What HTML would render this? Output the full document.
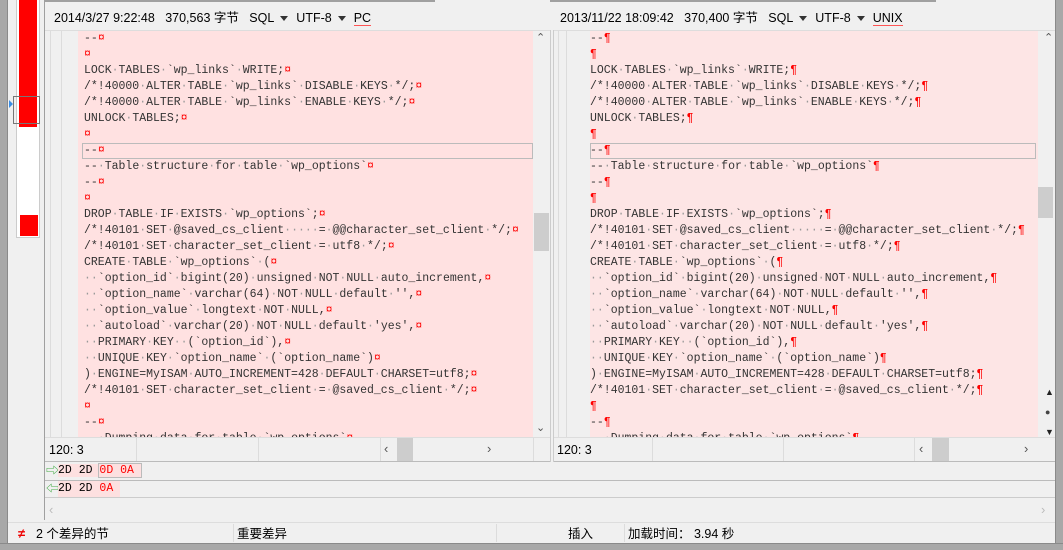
<!DOCTYPE html>
<html><head><meta charset="utf-8"><style>
*{margin:0;padding:0;box-sizing:border-box}
body{width:1063px;height:550px;overflow:hidden;background:#f0f0f0;position:relative;font-family:"Liberation Sans","Noto Sans CJK SC",sans-serif;font-size:12px;color:#000}
.abs{position:absolute}
.code{font-family:"Liberation Mono",monospace;font-size:11.5px;line-height:16px;color:#333;white-space:pre}
.code div{height:16px}
.e{color:#f00}
.d{color:#999}
.hdr{font-size:12.5px;top:7px;white-space:nowrap}
.tri{display:inline-block;width:0;height:0;border-left:4px solid transparent;border-right:4px solid transparent;border-top:5px solid #333;vertical-align:middle;margin:0 8px 0 6px}
.vl{position:absolute;background:#dcdcdc;width:1px}
.sb{font-size:12.5px;top:524px;line-height:20px}
</style></head><body>
<div class="abs" style="left:0;top:0;width:8px;height:550px;background:#a8a8a8;border-right:1px solid #8a8a8a"></div>
<div class="abs" style="left:1055px;top:0;width:8px;height:550px;background:#a8a8a8;border-left:1px solid #8a8a8a"></div>
<div class="abs" style="left:0;top:543px;width:1063px;height:7px;background:#a8a8a8;border-top:1px solid #8a8a8a"></div>

<div class="abs" style="left:16px;top:0;width:24px;height:238px;background:#fff;border:1px solid #ccc;border-top:none"></div>
<div class="abs" style="left:19px;top:0;width:18px;height:127px;background:#f00"></div>
<div class="abs" style="left:20px;top:215px;width:18px;height:21px;background:#f00"></div>
<div class="abs" style="left:13px;top:96px;width:27px;height:28px;border:1px solid #777"></div>
<div class="abs" style="left:9px;top:100px;width:0;height:0;border-top:4px solid transparent;border-bottom:4px solid transparent;border-left:4px solid #3a8ee6"></div>
<div class="abs" style="left:44px;top:0;width:1px;height:520px;background:#a0a0a0"></div>

<div class="abs" style="left:44px;top:0;width:391px;height:2px;background:#a0a0a0"></div>
<div class="abs hdr" style="left:54px">2014/3/27 9:22:48 &nbsp;&nbsp;370,563 字节 &nbsp;&nbsp;SQL<span class="tri"></span>UTF-8<span class="tri"></span><span style="border-bottom:1px solid #f55">PC</span></div>
<div class="abs" style="left:550px;top:0;width:386px;height:2px;background:#a0a0a0"></div>
<div class="abs hdr" style="left:560px">2013/11/22 18:09:42 &nbsp;&nbsp;370,400 字节 &nbsp;&nbsp;SQL<span class="tri"></span>UTF-8<span class="tri"></span><span style="border-bottom:1px solid #f55">UNIX</span></div>

<div class="abs" style="left:45px;top:30px;width:505px;height:408px;background:#f0f0f0;border-top:1px solid #ddd;overflow:hidden">
 <div class="vl" style="left:5px;top:0;height:408px"></div>
 <div class="vl" style="left:16px;top:0;height:408px"></div>
 <div class="abs" style="left:33px;top:0;width:455px;height:408px;background:#ffe1e1"></div>
 <div class="abs" style="left:37px;top:112px;width:451px;height:16px;border:1px solid #bbb"></div>
 <div class="abs code" style="left:39px;top:0px;width:449px;overflow:hidden"><div>--<span class="e">¤</span></div><div><span class="e">¤</span></div><div>LOCK<span class="d">·</span>TABLES<span class="d">·</span>`wp_links`<span class="d">·</span>WRITE;<span class="e">¤</span></div><div>/*!40000<span class="d">·</span>ALTER<span class="d">·</span>TABLE<span class="d">·</span>`wp_links`<span class="d">·</span>DISABLE<span class="d">·</span>KEYS<span class="d">·</span>*/;<span class="e">¤</span></div><div>/*!40000<span class="d">·</span>ALTER<span class="d">·</span>TABLE<span class="d">·</span>`wp_links`<span class="d">·</span>ENABLE<span class="d">·</span>KEYS<span class="d">·</span>*/;<span class="e">¤</span></div><div>UNLOCK<span class="d">·</span>TABLES;<span class="e">¤</span></div><div><span class="e">¤</span></div><div>--<span class="e">¤</span></div><div>--<span class="d">·</span>Table<span class="d">·</span>structure<span class="d">·</span>for<span class="d">·</span>table<span class="d">·</span>`wp_options`<span class="e">¤</span></div><div>--<span class="e">¤</span></div><div><span class="e">¤</span></div><div>DROP<span class="d">·</span>TABLE<span class="d">·</span>IF<span class="d">·</span>EXISTS<span class="d">·</span>`wp_options`;<span class="e">¤</span></div><div>/*!40101<span class="d">·</span>SET<span class="d">·</span>@saved_cs_client<span class="d">·····</span>=<span class="d">·</span>@@character_set_client<span class="d">·</span>*/;<span class="e">¤</span></div><div>/*!40101<span class="d">·</span>SET<span class="d">·</span>character_set_client<span class="d">·</span>=<span class="d">·</span>utf8<span class="d">·</span>*/;<span class="e">¤</span></div><div>CREATE<span class="d">·</span>TABLE<span class="d">·</span>`wp_options`<span class="d">·</span>(<span class="e">¤</span></div><div><span class="d">··</span>`option_id`<span class="d">·</span>bigint(20)<span class="d">·</span>unsigned<span class="d">·</span>NOT<span class="d">·</span>NULL<span class="d">·</span>auto_increment,<span class="e">¤</span></div><div><span class="d">··</span>`option_name`<span class="d">·</span>varchar(64)<span class="d">·</span>NOT<span class="d">·</span>NULL<span class="d">·</span>default<span class="d">·</span>'',<span class="e">¤</span></div><div><span class="d">··</span>`option_value`<span class="d">·</span>longtext<span class="d">·</span>NOT<span class="d">·</span>NULL,<span class="e">¤</span></div><div><span class="d">··</span>`autoload`<span class="d">·</span>varchar(20)<span class="d">·</span>NOT<span class="d">·</span>NULL<span class="d">·</span>default<span class="d">·</span>'yes',<span class="e">¤</span></div><div><span class="d">··</span>PRIMARY<span class="d">·</span>KEY<span class="d">··</span>(`option_id`),<span class="e">¤</span></div><div><span class="d">··</span>UNIQUE<span class="d">·</span>KEY<span class="d">·</span>`option_name`<span class="d">·</span>(`option_name`)<span class="e">¤</span></div><div>)<span class="d">·</span>ENGINE=MyISAM<span class="d">·</span>AUTO_INCREMENT=428<span class="d">·</span>DEFAULT<span class="d">·</span>CHARSET=utf8;<span class="e">¤</span></div><div>/*!40101<span class="d">·</span>SET<span class="d">·</span>character_set_client<span class="d">·</span>=<span class="d">·</span>@saved_cs_client<span class="d">·</span>*/;<span class="e">¤</span></div><div><span class="e">¤</span></div><div>--<span class="e">¤</span></div><div>--<span class="d">·</span>Dumping<span class="d">·</span>data<span class="d">·</span>for<span class="d">·</span>table<span class="d">·</span>`wp_options`<span class="e">¤</span></div></div>
 <div class="abs" style="left:488px;top:0;width:17px;height:408px;background:#f0f0f0"></div>
 <div class="abs" style="left:489px;top:182px;width:15px;height:38px;background:#cdcdcd"></div>
 <div class="abs" style="left:491px;top:0;font-size:11px;color:#555">⌃</div>
 <div class="abs" style="left:491px;top:390px;font-size:11px;color:#555">⌄</div>
</div>
<div class="abs" style="left:45px;top:437px;width:505px;height:25px;background:#f0f0f0;border-top:1px solid #ddd;border-bottom:1px solid #bbb"></div>
<div class="abs" style="left:49px;top:443px;font-size:12.5px">120: 3</div>
<div class="vl" style="left:136px;top:438px;height:23px"></div>
<div class="vl" style="left:258px;top:438px;height:23px"></div>
<div class="vl" style="left:380px;top:438px;height:23px"></div>
<div class="abs" style="left:397px;top:438px;width:16px;height:23px;background:#cdcdcd"></div>
<div class="abs" style="left:384px;top:441px;color:#555;font-size:13px">‹</div>
<div class="abs" style="left:487px;top:441px;color:#555;font-size:13px">›</div>
<div class="vl" style="left:533px;top:438px;height:23px"></div>

<div class="abs" style="left:550px;top:30px;width:4px;height:432px;background:#f0f0f0;border-left:1px solid #ccc;border-right:1px solid #ccc"></div>

<div class="abs" style="left:554px;top:30px;width:501px;height:408px;background:#f0f0f0;border-top:1px solid #ddd;overflow:hidden">
 <div class="vl" style="left:4px;top:0;height:408px"></div>
 <div class="vl" style="left:12px;top:0;height:408px"></div>
 <div class="abs" style="left:36px;top:0;width:448px;height:408px;background:#fde5e5"></div>
 <div class="abs" style="left:36px;top:112px;width:446px;height:16px;border:1px solid #bbb"></div>
 <div class="abs code" style="left:36px;top:0px;width:446px;overflow:hidden"><div>--<span class="e">¶</span></div><div><span class="e">¶</span></div><div>LOCK<span class="d">·</span>TABLES<span class="d">·</span>`wp_links`<span class="d">·</span>WRITE;<span class="e">¶</span></div><div>/*!40000<span class="d">·</span>ALTER<span class="d">·</span>TABLE<span class="d">·</span>`wp_links`<span class="d">·</span>DISABLE<span class="d">·</span>KEYS<span class="d">·</span>*/;<span class="e">¶</span></div><div>/*!40000<span class="d">·</span>ALTER<span class="d">·</span>TABLE<span class="d">·</span>`wp_links`<span class="d">·</span>ENABLE<span class="d">·</span>KEYS<span class="d">·</span>*/;<span class="e">¶</span></div><div>UNLOCK<span class="d">·</span>TABLES;<span class="e">¶</span></div><div><span class="e">¶</span></div><div>--<span class="e">¶</span></div><div>--<span class="d">·</span>Table<span class="d">·</span>structure<span class="d">·</span>for<span class="d">·</span>table<span class="d">·</span>`wp_options`<span class="e">¶</span></div><div>--<span class="e">¶</span></div><div><span class="e">¶</span></div><div>DROP<span class="d">·</span>TABLE<span class="d">·</span>IF<span class="d">·</span>EXISTS<span class="d">·</span>`wp_options`;<span class="e">¶</span></div><div>/*!40101<span class="d">·</span>SET<span class="d">·</span>@saved_cs_client<span class="d">·····</span>=<span class="d">·</span>@@character_set_client<span class="d">·</span>*/;<span class="e">¶</span></div><div>/*!40101<span class="d">·</span>SET<span class="d">·</span>character_set_client<span class="d">·</span>=<span class="d">·</span>utf8<span class="d">·</span>*/;<span class="e">¶</span></div><div>CREATE<span class="d">·</span>TABLE<span class="d">·</span>`wp_options`<span class="d">·</span>(<span class="e">¶</span></div><div><span class="d">··</span>`option_id`<span class="d">·</span>bigint(20)<span class="d">·</span>unsigned<span class="d">·</span>NOT<span class="d">·</span>NULL<span class="d">·</span>auto_increment,<span class="e">¶</span></div><div><span class="d">··</span>`option_name`<span class="d">·</span>varchar(64)<span class="d">·</span>NOT<span class="d">·</span>NULL<span class="d">·</span>default<span class="d">·</span>'',<span class="e">¶</span></div><div><span class="d">··</span>`option_value`<span class="d">·</span>longtext<span class="d">·</span>NOT<span class="d">·</span>NULL,<span class="e">¶</span></div><div><span class="d">··</span>`autoload`<span class="d">·</span>varchar(20)<span class="d">·</span>NOT<span class="d">·</span>NULL<span class="d">·</span>default<span class="d">·</span>'yes',<span class="e">¶</span></div><div><span class="d">··</span>PRIMARY<span class="d">·</span>KEY<span class="d">··</span>(`option_id`),<span class="e">¶</span></div><div><span class="d">··</span>UNIQUE<span class="d">·</span>KEY<span class="d">·</span>`option_name`<span class="d">·</span>(`option_name`)<span class="e">¶</span></div><div>)<span class="d">·</span>ENGINE=MyISAM<span class="d">·</span>AUTO_INCREMENT=428<span class="d">·</span>DEFAULT<span class="d">·</span>CHARSET=utf8;<span class="e">¶</span></div><div>/*!40101<span class="d">·</span>SET<span class="d">·</span>character_set_client<span class="d">·</span>=<span class="d">·</span>@saved_cs_client<span class="d">·</span>*/;<span class="e">¶</span></div><div><span class="e">¶</span></div><div>--<span class="e">¶</span></div><div>--<span class="d">·</span>Dumping<span class="d">·</span>data<span class="d">·</span>for<span class="d">·</span>table<span class="d">·</span>`wp_options`<span class="e">¶</span></div></div>
 <div class="abs" style="left:484px;top:156px;width:15px;height:31px;background:#cdcdcd"></div>
 <div class="abs" style="left:490px;top:0;font-size:11px;color:#555">⌃</div>
 <div class="abs" style="left:491px;top:356px;font-size:9px;color:#222">▲</div>
 <div class="abs" style="left:491px;top:376px;font-size:9px;color:#444">●</div>
 <div class="abs" style="left:491px;top:396px;font-size:9px;color:#222">▼</div>
</div>
<div class="abs" style="left:554px;top:437px;width:501px;height:25px;background:#f0f0f0;border-top:1px solid #ddd;border-bottom:1px solid #bbb"></div>
<div class="abs" style="left:557px;top:443px;font-size:12.5px">120: 3</div>
<div class="vl" style="left:652px;top:438px;height:23px"></div>
<div class="vl" style="left:783px;top:438px;height:23px"></div>
<div class="vl" style="left:914px;top:438px;height:23px"></div>
<div class="abs" style="left:932px;top:438px;width:17px;height:23px;background:#cdcdcd"></div>
<div class="abs" style="left:919px;top:441px;color:#555;font-size:13px">‹</div>
<div class="abs" style="left:1024px;top:441px;color:#555;font-size:13px">›</div>

<div class="abs" style="left:45px;top:480px;width:1010px;height:1px;background:#bbb"></div>
<div class="abs" style="left:45px;top:497px;width:1010px;height:1px;background:#ccc"></div>
<div class="abs" style="left:46px;top:463px;color:#4a4;font-size:13px;line-height:16px">⇨</div>
<div class="abs" style="left:46px;top:481px;color:#4a4;font-size:13px;line-height:16px">⇦</div>
<div class="abs code" style="left:58px;top:463px;color:#000"><span style="background:#fde0e0">2D 2D </span><span class="e" style="background:#fde0e0;outline:1px solid #bbb">0D 0A&nbsp;</span></div>
<div class="abs code" style="left:58px;top:481px;color:#000;background:#fde0e0"><span>2D 2D </span><span class="e">0A </span></div>
<div class="abs" style="left:49px;top:502px;color:#bbb;font-size:13px">‹</div>
<div class="abs" style="left:1041px;top:502px;color:#bbb;font-size:13px">›</div>

<div class="abs" style="left:8px;top:522px;width:1047px;height:1px;background:#ddd"></div>
<div class="abs sb" style="left:18px;color:#e00;font-weight:bold;font-size:13px">≠</div>
<div class="abs sb" style="left:36px">2 个差异的节</div>
<div class="vl" style="left:233px;top:524px;height:18px"></div>
<div class="abs sb" style="left:237px">重要差异</div>
<div class="vl" style="left:496px;top:524px;height:18px"></div>
<div class="abs sb" style="left:568px">插入</div>
<div class="vl" style="left:624px;top:524px;height:18px"></div>
<div class="abs sb" style="left:628px">加载时间： 3.94 秒</div>
</body></html>
